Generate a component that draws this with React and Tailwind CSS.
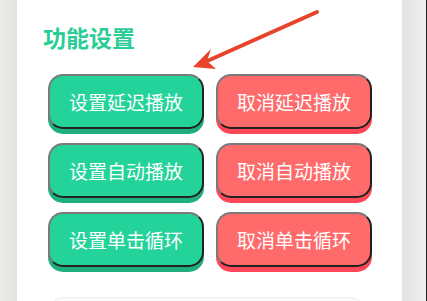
import React from "react";

const rows = [
  ["设置延迟播放", "取消延迟播放"],
  ["设置自动播放", "取消自动播放"],
  ["设置单击循环", "取消单击循环"],
];

function Btn({ label, tone }) {
  const green = tone === "green";
  return (
    <button
      className={
        "w-[156px] h-[55px] rounded-[15px] border-2 border-t-[#7a7a7a] border-l-[#7a7a7a] border-r-[#222] border-b-[#222] text-white text-[19px] leading-none flex items-center justify-center " +
        (green
          ? "bg-[#24d39a] shadow-[0_5px_0_#1fae80]"
          : "bg-[#ff6b6b] shadow-[0_5px_0_#ff4757]")
      }
    >
      {label}
    </button>
  );
}

export default function App() {
  return (
    <div
      className="relative w-[427px] h-[301px] flex overflow-hidden bg-white"
      style={{ fontFamily: '"Noto Sans CJK SC", "Noto Sans", sans-serif' }}
    >
      {/* left page edge */}
      <div className="w-[17px] h-full bg-gradient-to-r from-[#ececea] to-[#e2e2e0]" />

      {/* card */}
      <div className="flex-1 h-full bg-white pl-[31px] pt-[22px]">
        <h2 className="text-[23px] font-bold text-[#2bcc95] leading-[30px] -ml-[5px]">
          功能设置
        </h2>
        <div className="mt-[22px] flex flex-col gap-[14px]">
          {rows.map(([a, b]) => (
            <div key={a} className="flex gap-[12px]">
              <Btn label={a} tone="green" />
              <Btn label={b} tone="red" />
            </div>
          ))}
        </div>
        <div className="mt-[30px] w-[318px] h-[20px] rounded-t-2xl border border-[#ededed] bg-[#fbfbfb]" />
      </div>

      {/* right page edge */}
      <div className="w-[25px] h-full bg-gradient-to-r from-[#e3e4e2] to-[#eef0ee] border-r border-[#222]" />

      {/* annotation arrow */}
      <svg
        className="absolute left-0 top-0 pointer-events-none"
        width="427"
        height="301"
        viewBox="0 0 427 301"
      >
        <line
          x1="317"
          y1="12"
          x2="205"
          y2="62"
          stroke="#e8442b"
          strokeWidth="4"
          strokeLinecap="round"
        />
        <path d="M193 67 L211 49 L207 61 L216 69 Z" fill="#e8442b" />
      </svg>
    </div>
  );
}
